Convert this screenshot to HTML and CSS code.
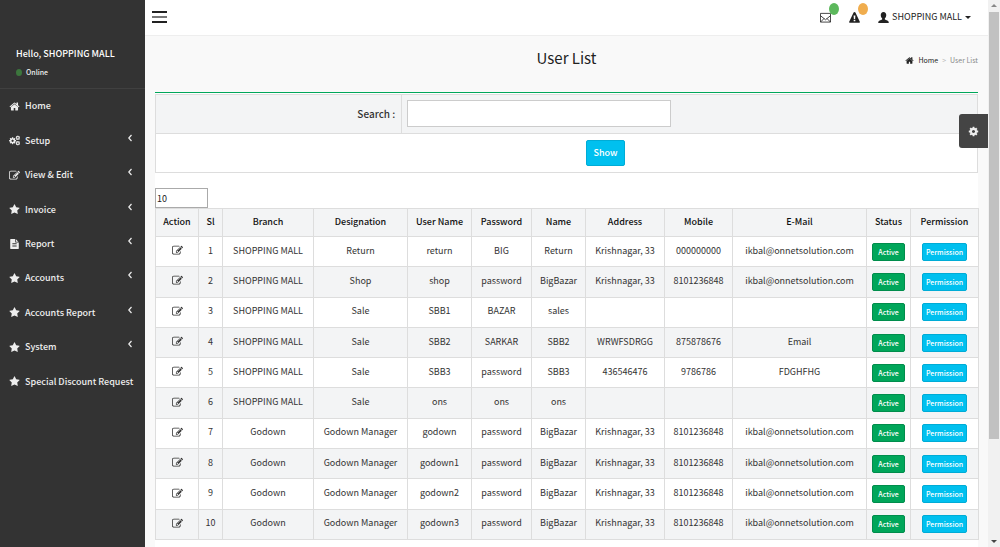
FILE: index.html
```html
<!DOCTYPE html>
<html lang="en">
<head>
<meta charset="utf-8">
<title>User List</title>
<link rel="stylesheet" href="styles.css">
</head>
<body>
<svg class="defs" aria-hidden="true">
<symbol id="home" viewBox="0 0 1792 1792"><path d="M1472 992v480q0 26-19 45t-45 19h-384v-384h-256v384h-384q-26 0-45-19t-19-45v-480q0-1 .5-3t.5-3l575-474 575 474q1 2 1 6zm223-69l-62 74q-8 9-21 11h-3q-13 0-21-7l-692-577-692 577q-12 8-24 7-13-2-21-11l-62-74q-8-10-7-23.500t11-21.500l719-599q32-26 76-26t76 26l244 204v-195q0-14 9-23t23-9h192q14 0 23 9t9 23v408l219 182q10 8 11 21.500t-7 23.500z"/></symbol>
<symbol id="star" viewBox="0 0 1792 1792"><path d="M1728 647q0 22-26 48l-363 354 86 500q1 7 1 20 0 21-10.500 35.500t-30.500 14.500q-19 0-40-12l-449-236-449 236q-22 12-40 12-21 0-31.500-14.500t-10.500-35.500q0-6 2-20l86-500-364-354q-25-27-25-48 0-37 56-46l502-73 225-455q19-41 49-41t49 41l225 455 502 73q56 9 56 46z"/></symbol>
<symbol id="edit" viewBox="0 0 1792 1792"><path d="M888 1184l116-116-152-152-116 116v56h96v96h56zm440-720q-16-16-33 1l-350 350q-17 17-1 33t33-1l350-350q17-17 1-33zm80 594v190q0 119-84.500 203.500t-203.500 84.500h-832q-119 0-203.500-84.500t-84.500-203.500v-832q0-119 84.500-203.500t203.500-84.500h832q63 0 117 25 15 7 18 23 3 17-9 29l-49 49q-14 14-32 8-23-6-45-6h-832q-66 0-113 47t-47 113v832q0 66 47 113t113 47h832q66 0 113-47t47-113v-126q0-13 9-22l64-64q15-15 35-7t20 29zm-96-738l288 288-672 672h-288v-288zm444 132l-92 92-288-288 92-92q28-28 68-28t68 28l152 152q28 28 28 68t-28 68z"/></symbol>
<symbol id="file" viewBox="0 0 1792 1792"><path d="M1596 476q14 14 28 36h-472v-472q22 14 36 28zm-476 164h544v1056q0 40-28 68t-68 28h-1344q-40 0-68-28t-28-68v-1600q0-40 28-68t68-28h800v544q0 40 28 68t68 28zm160 736v-64q0-14-9-23t-23-9h-704q-14 0-23 9t-9 23v64q0 14 9 23t23 9h704q14 0 23-9t9-23zm0-256v-64q0-14-9-23t-23-9h-704q-14 0-23 9t-9 23v64q0 14 9 23t23 9h704q14 0 23-9t9-23zm0-256v-64q0-14-9-23t-23-9h-704q-14 0-23 9t-9 23v64q0 14 9 23t23 9h704q14 0 23-9t9-23z"/></symbol>
<symbol id="cog" viewBox="0 0 1792 1792"><path d="M1152 896q0-106-75-181t-181-75-181 75-75 181 75 181 181 75 181-75 75-181zm512-109v222q0 12-8 23t-20 13l-185 28q-19 54-39 91 35 50 107 138 10 12 10 25t-9 23q-27 37-99 108t-94 71q-12 0-26-9l-138-108q-44 23-91 38-16 136-29 186-7 28-36 28h-222q-14 0-24.500-8.500t-11.500-21.500l-28-184q-49-16-90-37l-141 107q-10 9-25 9-14 0-25-11-126-114-165-168-7-10-7-23 0-12 8-23 15-21 51-66.500t54-70.500q-27-50-41-99l-183-27q-13-2-21-12.500t-8-23.500v-222q0-12 8-23t19-13l186-28q14-46 39-92-40-57-107-138-10-12-10-24 0-10 9-23 26-36 98.500-107.500t94.500-71.500q13 0 26 10l138 107q44-23 91-38 16-136 29-186 7-28 36-28h222q14 0 24.500 8.500t11.500 21.500l28 184q49 16 90 37l142-107q9-9 24-9 13 0 25 10 129 119 165 170 7 8 7 22 0 12-8 23-15 21-51 66.500t-54 70.500q26 50 41 98l183 28q13 2 21 12.500t8 23.500z"/></symbol>
<symbol id="cogs" viewBox="0 0 23 22"><use href="#cog" x="-1" y="3" width="17" height="17"/><use href="#cog" x="13" y="0" width="11" height="11"/><use href="#cog" x="13" y="11" width="11" height="11"/></symbol>
<symbol id="mail" viewBox="0 0 12 12"><path d="M.5 1.500h11v9.500H.5zM.5 4L6 8.500 11.500 4M.5 11l4-4M11.500 11l-4-4" fill="none" stroke="currentColor" stroke-width=".9"/></symbol>
<symbol id="warn" viewBox="0 0 12 12"><path fill-rule="evenodd" d="M6 0q.7 0 1 .6l4.800 9.900q.4 1-.6 1.100H.8q-1-.1-.6-1.100L5 .6Q5.300 0 6 0zM5 3.800l.3 3.700h1.400L7 3.800zM5.100 8.500v1.600h1.800V8.500z"/></symbol>
<symbol id="user" viewBox="0 0 12 12"><path d="M6 0c2 0 3 1.500 3 3.400 0 1.600-.6 2.800-1.500 3.500v1.200l3.200 1.400q1 .5 1.100 2.500H.2q.1-2 1.100-2.500l3.200-1.400V6.900C3.600 6.200 3 5 3 3.400 3 1.500 4 0 6 0z"/></symbol>
<symbol id="angle" viewBox="0 0 4 8"><path d="M3.500 1L.8 4l2.700 3" fill="none" stroke="currentColor" stroke-width="1.200"/></symbol>
</svg>
<div class="app">
<aside class="sidebar">
<div class="profile"><strong>Hello, SHOPPING MALL</strong><span class="online"><i class="dot"></i>Online</span></div>
<nav class="menu">
<a href="#"><svg class="icon"><use href="#home"/></svg>Home</a>
<a href="#"><svg class="icon"><use href="#cogs"/></svg>Setup<svg class="angle"><use href="#angle"/></svg></a>
<a href="#"><svg class="icon"><use href="#edit"/></svg>View &amp; Edit<svg class="angle"><use href="#angle"/></svg></a>
<a href="#"><svg class="icon"><use href="#star"/></svg>Invoice<svg class="angle"><use href="#angle"/></svg></a>
<a href="#"><svg class="icon file"><use href="#file"/></svg>Report<svg class="angle"><use href="#angle"/></svg></a>
<a href="#"><svg class="icon"><use href="#star"/></svg>Accounts<svg class="angle"><use href="#angle"/></svg></a>
<a href="#"><svg class="icon"><use href="#star"/></svg>Accounts Report<svg class="angle"><use href="#angle"/></svg></a>
<a href="#"><svg class="icon"><use href="#star"/></svg>System<svg class="angle"><use href="#angle"/></svg></a>
<a href="#"><svg class="icon"><use href="#star"/></svg>Special Discount Request</a>
</nav>
</aside>
<div class="main">
<header class="topbar">
<button class="burger" type="button" aria-label="Toggle menu"><i></i><i></i><i></i></button>
<div class="tools">
<button class="tool" type="button" aria-label="Messages"><svg class="icon"><use href="#mail"/></svg><i class="badge green"></i></button>
<button class="tool" type="button" aria-label="Alerts"><svg class="icon"><use href="#warn"/></svg><i class="badge orange"></i></button>
<button class="account" type="button"><svg class="icon"><use href="#user"/></svg>SHOPPING MALL<i class="caret"></i></button>
</div>
</header>
<div class="heading">
<h1>User List</h1>
<div class="crumbs"><svg class="icon"><use href="#home"/></svg><a href="#">Home</a><span class="sep">&gt;</span><span>User List</span></div>
</div>
<main class="box">
<form class="search">
<div class="search-row"><label for="q">Search :</label><div class="field"><input id="q" type="text"></div></div>
<div class="show-row"><button class="btn show" type="button">Show</button></div>
</form>
<input class="page-size" type="text" value="10" aria-label="Rows per page">
<table class="users">
<colgroup><col class="c-action"><col class="c-sl"><col class="c-branch"><col class="c-desig"><col class="c-user"><col class="c-pass"><col class="c-name"><col class="c-addr"><col class="c-mobile"><col class="c-mail"><col class="c-status"><col class="c-perm"></colgroup>
<thead><tr><th>Action</th><th>Sl</th><th>Branch</th><th>Designation</th><th>User Name</th><th>Password</th><th>Name</th><th>Address</th><th>Mobile</th><th>E-Mail</th><th>Status</th><th>Permission</th></tr></thead>
<tbody>
<tr><td><a href="#" aria-label="Edit"><svg class="icon"><use href="#edit"/></svg></a></td><td>1</td><td>SHOPPING MALL</td><td>Return</td><td>return</td><td>BIG</td><td>Return</td><td>Krishnagar, 33</td><td>000000000</td><td>ikbal@onnetsolution.com</td><td><button class="btn active" type="button">Active</button></td><td><button class="btn perm" type="button">Permission</button></td></tr>
<tr><td><a href="#" aria-label="Edit"><svg class="icon"><use href="#edit"/></svg></a></td><td>2</td><td>SHOPPING MALL</td><td>Shop</td><td>shop</td><td>password</td><td>BigBazar</td><td>Krishnagar, 33</td><td>8101236848</td><td>ikbal@onnetsolution.com</td><td><button class="btn active" type="button">Active</button></td><td><button class="btn perm" type="button">Permission</button></td></tr>
<tr><td><a href="#" aria-label="Edit"><svg class="icon"><use href="#edit"/></svg></a></td><td>3</td><td>SHOPPING MALL</td><td>Sale</td><td>SBB1</td><td>BAZAR</td><td>sales</td><td></td><td></td><td></td><td><button class="btn active" type="button">Active</button></td><td><button class="btn perm" type="button">Permission</button></td></tr>
<tr><td><a href="#" aria-label="Edit"><svg class="icon"><use href="#edit"/></svg></a></td><td>4</td><td>SHOPPING MALL</td><td>Sale</td><td>SBB2</td><td>SARKAR</td><td>SBB2</td><td>WRWFSDRGG</td><td>875878676</td><td>Email</td><td><button class="btn active" type="button">Active</button></td><td><button class="btn perm" type="button">Permission</button></td></tr>
<tr><td><a href="#" aria-label="Edit"><svg class="icon"><use href="#edit"/></svg></a></td><td>5</td><td>SHOPPING MALL</td><td>Sale</td><td>SBB3</td><td>password</td><td>SBB3</td><td>436546476</td><td>9786786</td><td>FDGHFHG</td><td><button class="btn active" type="button">Active</button></td><td><button class="btn perm" type="button">Permission</button></td></tr>
<tr><td><a href="#" aria-label="Edit"><svg class="icon"><use href="#edit"/></svg></a></td><td>6</td><td>SHOPPING MALL</td><td>Sale</td><td>ons</td><td>ons</td><td>ons</td><td></td><td></td><td></td><td><button class="btn active" type="button">Active</button></td><td><button class="btn perm" type="button">Permission</button></td></tr>
<tr><td><a href="#" aria-label="Edit"><svg class="icon"><use href="#edit"/></svg></a></td><td>7</td><td>Godown</td><td>Godown Manager</td><td>godown</td><td>password</td><td>BigBazar</td><td>Krishnagar, 33</td><td>8101236848</td><td>ikbal@onnetsolution.com</td><td><button class="btn active" type="button">Active</button></td><td><button class="btn perm" type="button">Permission</button></td></tr>
<tr><td><a href="#" aria-label="Edit"><svg class="icon"><use href="#edit"/></svg></a></td><td>8</td><td>Godown</td><td>Godown Manager</td><td>godown1</td><td>password</td><td>BigBazar</td><td>Krishnagar, 33</td><td>8101236848</td><td>ikbal@onnetsolution.com</td><td><button class="btn active" type="button">Active</button></td><td><button class="btn perm" type="button">Permission</button></td></tr>
<tr><td><a href="#" aria-label="Edit"><svg class="icon"><use href="#edit"/></svg></a></td><td>9</td><td>Godown</td><td>Godown Manager</td><td>godown2</td><td>password</td><td>BigBazar</td><td>Krishnagar, 33</td><td>8101236848</td><td>ikbal@onnetsolution.com</td><td><button class="btn active" type="button">Active</button></td><td><button class="btn perm" type="button">Permission</button></td></tr>
<tr><td><a href="#" aria-label="Edit"><svg class="icon"><use href="#edit"/></svg></a></td><td>10</td><td>Godown</td><td>Godown Manager</td><td>godown3</td><td>password</td><td>BigBazar</td><td>Krishnagar, 33</td><td>8101236848</td><td>ikbal@onnetsolution.com</td><td><button class="btn active" type="button">Active</button></td><td><button class="btn perm" type="button">Permission</button></td></tr>
</tbody>
</table>
</main>
<button class="settings" type="button" aria-label="Settings"><svg class="icon"><use href="#cog"/></svg></button>
</div>
<div class="scrollbar" aria-hidden="true"><i class="arrow up"></i><i class="thumb"></i><i class="arrow down"></i></div>
</div>
</body>
</html>
```
FILE: styles.css
```css
* { box-sizing: border-box; }
body, button, input { font-family: "Noto Sans CJK SC", "Noto Sans", sans-serif; font-size: 9px; line-height: 14px; }
body { margin: 0; color: #333; overflow: hidden; }
a { color: inherit; text-decoration: none; }
button { padding: 0; border: 0; background: none; color: inherit; cursor: pointer; }
.defs { position: absolute; width: 0; height: 0; }
.icon { width: 11px; height: 11px; fill: currentColor; display: block; flex: none; }

.app { display: flex; height: 100vh; }
.sidebar { width: 145px; flex: none; background: #333; color: #eee; }
.profile { display: flex; flex-direction: column; gap: 4px; padding: 47px 16px 9px; border-bottom: 1px solid #404040; }
.profile strong { white-space: nowrap; color: #fff; font-weight: 500; }
.online { display: flex; align-items: center; gap: 4px; font-size: 7px; font-weight: 500; }
.dot { width: 6px; height: 7px; border-radius: 50%; background: #3c763d; }
.menu { display: grid; grid-template-columns: minmax(0, 1fr); grid-template-rows: repeat(9, 1fr); height: 310px; }
.menu a { display: flex; align-items: center; gap: 5px; padding: 0 13px 0 9px; font-weight: 500; white-space: nowrap; }
.menu .file { height: 10px; }
.angle { width: 4px; height: 8px; margin: 0 0 6px auto; }

.main { flex: 1; min-width: 0; position: relative; display: flex; flex-direction: column; background: #f9f9f9; }
.topbar { flex: none; display: flex; justify-content: space-between; align-items: center; height: 36px; padding: 0 17px 1px 7px; background: #fff; border-bottom: 1px solid #eee; }
.burger { display: grid; gap: 3px; width: 15px; }
.burger i { height: 2px; background: #222; }
.burger i:nth-child(2) { background: #777; }
.tools { display: flex; align-items: center; gap: 18px; color: #222; }
.tool { position: relative; }
.badge { position: absolute; left: 9px; top: -9px; width: 10px; height: 12px; border-radius: 50%; }
.green { background: #5cb85c; }
.orange { background: #f0ad4e; }
.account { display: flex; align-items: center; gap: 3px; }
.caret { border: 3px solid transparent; border-top-color: #222; border-bottom: 0; }
.heading { flex: none; display: grid; grid-template-columns: 1fr auto 1fr; align-items: center; height: 56px; padding: 0 10px; }
h1 { grid-column: 2; margin: 0 0 12px; font-size: 15px; line-height: 24px; font-weight: 400; color: #222; }
.crumbs { display: flex; align-items: center; justify-content: flex-end; gap: 4px; margin-bottom: 8px; font-size: 7px; color: #888; }
.crumbs a, .crumbs .icon { color: #222; }
.crumbs .icon { width: 9px; height: 9px; }
.crumbs .sep { color: #bbb; }
.box { flex: 1 0 auto; margin: 0 10px; border-top: 1px solid #00a65a; background: #fff; }
.search { margin-top: 1px; border: 1px solid #ddd; }
.search-row { display: grid; grid-template-columns: 30% 1fr; height: 39px; background: #f3f4f5; border-bottom: 1px solid #ddd; }
.search-row label { display: flex; align-items: center; justify-content: flex-end; padding-right: 6px; border-right: 1px solid #ddd; font-size: 10px; font-weight: 500; }
.field { padding: 5px; }
.field input { width: 264px; max-width: 100%; height: 27px; padding: 0 6px; border: 1px solid #ccc; background: #fff; }
.show-row { display: flex; justify-content: center; padding: 6px 0 6px 78px; }
.btn { height: 18px; border: 1px solid #00acd6; border-radius: 2px; background: #00c0ef; color: #fff; font-size: 7px; line-height: 14px; font-weight: 500; }
.show { width: 39px; height: 26px; font-size: 9px; }
.active { width: 33px; background: #00a65a; border-color: #008d4c; }
.perm { width: 45px; }
.page-size { display: block; width: 53px; height: 20px; margin-top: 15px; padding: 0 1px; border: 1px solid #aaa; background: #fff; color: #222; }
.users { width: 100%; height: 332px; table-layout: fixed; border-collapse: collapse; text-align: center; }
.users th, .users td { padding: 0 0 2px; border: 1px solid #ddd; white-space: nowrap; }
.users th { height: 28px; color: #111; font-weight: 500; }
.users td:nth-child(n+11) { padding-bottom: 0; }
.users thead tr, .users tbody tr:nth-child(even) { background: #f3f4f5; }
.users .icon { margin: auto; }
.users .btn { display: block; margin: auto; }
.c-action { width: 43px; }
.c-sl { width: 24px; }
.c-branch { width: 91px; }
.c-desig { width: 94px; }
.c-user { width: 64px; }
.c-pass { width: 60px; }
.c-name { width: 54px; }
.c-addr { width: 79px; }
.c-mobile { width: 68px; }
.c-mail { width: 134px; }
.c-status { width: 44px; }
.c-perm { width: 68px; }
.settings { position: absolute; right: 0; top: 114px; display: grid; place-items: center; width: 29px; height: 34px; border-radius: 3px 0 0 3px; background: #444; color: #eee; }
.scrollbar { width: 12px; flex: none; display: flex; flex-direction: column; align-items: center; padding: 4px 0; background: #f1f1f1; }
.thumb { width: 10px; height: 427px; margin-top: 5px; background: #c1c1c1; }
.arrow { border: 3px solid transparent; }
.up { border-top: 0; border-bottom-color: #888; }
.down { margin-top: auto; border-bottom: 0; border-top-color: #444; }
```
